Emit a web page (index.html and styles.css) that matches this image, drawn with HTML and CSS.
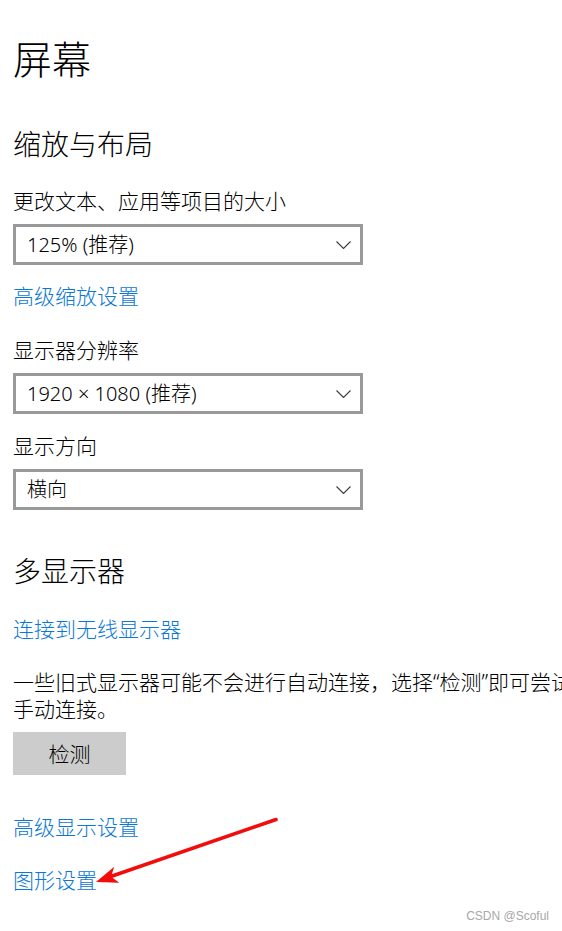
FILE: index.html
```html
<!DOCTYPE html>
<html lang="zh-CN">
<head>
<meta charset="utf-8">
<title>屏幕</title>
<link rel="stylesheet" href="styles.css">
</head>
<body>
<main class="page">
  <h1 class="title">屏幕</h1>

  <section class="group">
    <h2 class="heading">缩放与布局</h2>
    <div class="field">
      <div class="label">更改文本、应用等项目的大小</div>
      <div class="select"><span>125% (推荐)</span><svg class="chev" viewBox="0 0 15 8" width="15" height="8"><polyline points="0.5,0.5 7.5,7.5 14.5,0.5"/></svg></div>
    </div>
    <a class="link link-after-select" href="#">高级缩放设置</a>
    <div class="field field-after-link">
      <div class="label">显示器分辨率</div>
      <div class="select"><span>1920 × 1080 (推荐)</span><svg class="chev" viewBox="0 0 15 8" width="15" height="8"><polyline points="0.5,0.5 7.5,7.5 14.5,0.5"/></svg></div>
    </div>
    <div class="field field-after-select">
      <div class="label">显示方向</div>
      <div class="select"><span>横向</span><svg class="chev" viewBox="0 0 15 8" width="15" height="8"><polyline points="0.5,0.5 7.5,7.5 14.5,0.5"/></svg></div>
    </div>
  </section>

  <section class="group">
    <h2 class="heading">多显示器</h2>
    <a class="link link-after-heading" href="#">连接到无线显示器</a>
    <p class="note">一些旧式显示器可能不会进行自动连接，选择“检测”即可尝试手动连接。</p>
    <button class="btn" type="button">检测</button>
    <a class="link link-after-btn" href="#">高级显示设置</a>
    <a class="link link-after-link" href="#">图形设置</a>
  </section>
</main>

<svg class="annot" viewBox="0 0 562 931" width="562" height="931">
  <line x1="276" y1="819.5" x2="110" y2="876.8"/>
  <polygon points="96,882 119.4,882.8 111.1,876.7 114.2,866.8"/>
</svg>

<div class="watermark">CSDN @Scoful</div>
</body>
</html>
```

FILE: styles.css
```css
html, body {
  margin: 0;
  padding: 0;
  overflow: hidden;
  background: #ffffff;
}

body {
  width: 562px;
  height: 931px;
  position: relative;
  font-family: "Noto Sans", "Noto Sans CJK SC", sans-serif;
  font-weight: 300;
  color: #000000;
}

.page {
  padding: 35px 0 0 13px;
}

.title {
  margin: 0;
  font-size: 39px;
  line-height: 48px;
  font-weight: 300;
}

.heading {
  margin: 43px 0 0 0;
  font-size: 28px;
  line-height: 36px;
  font-weight: 300;
}

.field {
  display: flex;
  flex-direction: column;
  gap: 9px;
  margin-top: 25px;
}

.field-after-link {
  margin-top: 26px;
}

.field-after-select {
  margin-top: 18px;
}

.label {
  font-size: 21px;
  line-height: 28px;
}

.select {
  box-sizing: border-box;
  width: 350px;
  height: 41px;
  border: 3px solid #999999;
  padding: 0 9px 0 11px;
  display: flex;
  align-items: center;
  justify-content: space-between;
  font-size: 20px;
  line-height: 28px;
}

.chev {
  display: block;
  fill: none;
  stroke: #3a3a3a;
  stroke-width: 1.1;
}

.link {
  display: block;
  width: fit-content;
  font-size: 21px;
  line-height: 28px;
  color: #0a78d4;
  text-decoration: none;
}

.link-after-select {
  margin-top: 17px;
}

.link-after-heading {
  margin-top: 26px;
}

.link-after-btn {
  margin-top: 38px;
}

.link-after-link {
  margin-top: 25px;
}

.note {
  margin: 26px 0 0 0;
  width: 570px;
  font-size: 21px;
  line-height: 27px;
}

.btn {
  display: block;
  margin-top: 9px;
  width: 113px;
  height: 43px;
  border: none;
  background: #cccccc;
  color: #000000;
  font-family: inherit;
  font-weight: 300;
  font-size: 21px;
  line-height: 28px;
  padding: 0;
}

.annot {
  position: absolute;
  left: 0;
  top: 0;
  pointer-events: none;
}

.annot line {
  stroke: #f20d0d;
  stroke-width: 3.6;
  stroke-linecap: round;
}

.annot polygon {
  fill: #f20d0d;
}

.watermark {
  position: absolute;
  right: 13px;
  bottom: 8px;
  font-family: "Liberation Sans", Arial, sans-serif;
  font-weight: 400;
  font-size: 12px;
  line-height: 14px;
  color: #a8a8a8;
}
```
